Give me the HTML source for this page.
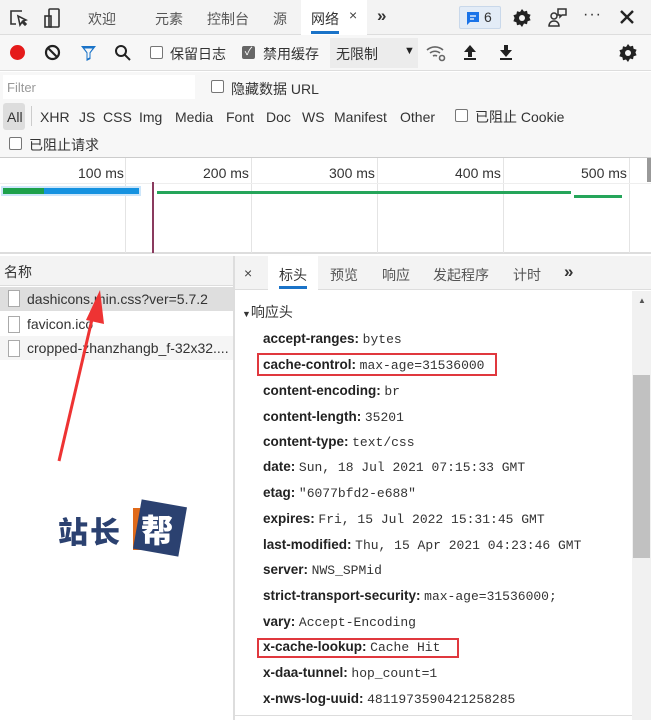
<!DOCTYPE html>
<html><head><meta charset="utf-8"><style>
*{margin:0;padding:0;box-sizing:border-box}
body{width:651px;height:720px;overflow:hidden;background:#fff;font-family:"Liberation Sans","Noto Sans CJK SC",sans-serif;font-size:13px;color:#333;position:relative}
.a{position:absolute;white-space:nowrap}
.cb{position:absolute;width:13px;height:13px;border:1px solid #767676;border-radius:2px;background:#fff}
.k{font-weight:bold;color:#222;font-size:13.5px}
.v{font-family:"Liberation Mono",monospace;font-size:13px;color:#333}
</style></head><body>
<!-- top tabs -->
<div class="a" style="left:0;top:0;width:651px;height:35px;background:#f3f3f3;border-bottom:1px solid #ddd"></div>
<svg class="a" style="left:8px;top:8px" width="20" height="20" viewBox="0 0 20 20" fill="none" stroke="#333" stroke-width="1.6"><path d="M14 3H3v13h5"/><path d="M10 8l2 9 2-3 3 3 1-1-3-3 3-1z" fill="#fff"/></svg>
<svg class="a" style="left:43px;top:7px" width="18" height="22" viewBox="0 0 18 22" fill="none" stroke="#333" stroke-width="1.6"><rect x="6" y="2" width="10" height="18" rx="1"/><rect x="2" y="9" width="6" height="11"/></svg>
<div class="a" style="left:88px;top:9px;color:#555;font-size:14px">欢迎</div>
<div class="a" style="left:155px;top:9px;color:#555;font-size:14px">元素</div>
<div class="a" style="left:207px;top:9px;color:#555;font-size:14px">控制台</div>
<div class="a" style="left:273px;top:9px;color:#555;font-size:14px">源</div>
<div class="a" style="left:301px;top:0;width:66px;height:35px;background:#fff"></div>
<div class="a" style="left:311px;top:9px;color:#333;font-size:14px">网络</div>
<div class="a" style="left:349px;top:7px;color:#444;font-size:14px">×</div>
<div class="a" style="left:311px;top:31px;width:28px;height:3px;background:#1a73c8"></div>
<div class="a" style="left:377px;top:6px;color:#333;font-size:17px;font-weight:bold">»</div>
<div class="a" style="left:459px;top:6px;width:42px;height:23px;background:#e3ecf7;border:1px solid #c9d8ea;border-radius:2px"></div>
<svg class="a" style="left:466px;top:11px" width="14" height="14" viewBox="0 0 14 14"><path d="M1 1h12v10H4l-3 3z" fill="#1a73e8"/><path d="M4 5h6M4 8h4" stroke="#fff" stroke-width="1.3"/></svg>
<div class="a" style="left:484px;top:9px;color:#333;font-size:14px">6</div>
<svg class="a" style="left:512px;top:8px" width="20" height="20" viewBox="0 0 20 20"><path d="M10 1l2 2.5 3-.8.6 3 3 1-1.2 2.8 1.2 2.8-3 1-.6 3-3-.8L10 19l-2-2.5-3 .8-.6-3-3-1L2.6 10 1.4 7.2l3-1 .6-3 3 .8z" fill="#222"/><circle cx="10" cy="10" r="3" fill="#f3f3f3"/></svg>
<svg class="a" style="left:546px;top:6px" width="24" height="24" viewBox="0 0 24 24" fill="none" stroke="#333" stroke-width="1.5"><circle cx="8" cy="10" r="3"/><path d="M3 20c0-3 2-5 5-5s5 2 5 5z"/><path d="M12 3h8v6h-4l-2 2V9h-2z"/></svg>
<div class="a" style="left:583px;top:6px;color:#333;font-size:16px;letter-spacing:1px">···</div>
<svg class="a" style="left:620px;top:10px" width="14" height="14" viewBox="0 0 14 14" stroke="#222" stroke-width="2.4"><path d="M1 1l12 12M13 1L1 13"/></svg>
<!-- toolbar -->
<div class="a" style="left:0;top:35px;width:651px;height:36px;background:#f7f7f7;border-bottom:1px solid #ddd"></div>
<div class="a" style="left:10px;top:45px;width:15px;height:15px;border-radius:50%;background:#e51b1b"></div>
<svg class="a" style="left:44px;top:44px" width="17" height="17" viewBox="0 0 17 17" fill="none" stroke="#222" stroke-width="2.2"><circle cx="8.5" cy="8.5" r="6.5"/><path d="M4 4l9 9"/></svg>
<svg class="a" style="left:80px;top:45px" width="17" height="16" viewBox="0 0 17 16"><path d="M1 1h15l-5.5 7v6l-4 2V8z" fill="#1a73c8"/><path d="M4.5 3.5h8l-3 4v5l-2 1V7.5z" fill="#f7f7f7"/></svg>
<svg class="a" style="left:114px;top:44px" width="18" height="18" viewBox="0 0 18 18" fill="none" stroke="#222" stroke-width="2"><circle cx="7" cy="7" r="5"/><path d="M11 11l5 5"/></svg>
<div class="cb" style="left:150px;top:46px"></div>
<div class="a" style="left:170px;top:44px;font-size:14px;color:#333">保留日志</div>
<div class="a" style="left:242px;top:46px;width:13px;height:13px;background:#666;border-radius:2px;color:#fff;font-size:11px;line-height:13px;text-align:center">✓</div>
<div class="a" style="left:263px;top:44px;font-size:14px;color:#333">禁用缓存</div>
<div class="a" style="left:330px;top:38px;width:88px;height:30px;background:#ececec"></div>
<div class="a" style="left:336px;top:44px;font-size:14px;color:#333">无限制</div>
<div class="a" style="left:404px;top:45px;font-size:11px;color:#222">▼</div>
<svg class="a" style="left:426px;top:44px" width="22" height="18" viewBox="0 0 22 18" fill="none" stroke="#666" stroke-width="1.6"><path d="M1 6a12 12 0 0 1 16 0M4 9a8 8 0 0 1 10 0M7 12a4 4 0 0 1 4 0"/><circle cx="16" cy="14" r="2.5"/></svg>
<svg class="a" style="left:463px;top:44px" width="14" height="17" viewBox="0 0 14 17"><path d="M7 1l6 7H9v5H5V8H1z" fill="#222"/><rect x="1" y="14" width="12" height="2" fill="#222"/></svg>
<svg class="a" style="left:499px;top:44px" width="14" height="17" viewBox="0 0 14 17"><path d="M7 13l6-7H9V1H5v5H1z" fill="#222"/><rect x="1" y="14" width="12" height="2" fill="#222"/></svg>
<svg class="a" style="left:618px;top:43px" width="20" height="20" viewBox="0 0 20 20"><path d="M10 1l2 2.5 3-.8.6 3 3 1-1.2 2.8 1.2 2.8-3 1-.6 3-3-.8L10 19l-2-2.5-3 .8-.6-3-3-1L2.6 10 1.4 7.2l3-1 .6-3 3 .8z" fill="#222"/><circle cx="10" cy="10" r="3" fill="#f7f7f7"/></svg>
<!-- filter rows -->
<div class="a" style="left:0;top:72px;width:651px;height:86px;background:#f7f7f7;border-bottom:1px solid #ccc"></div>
<div class="a" style="left:3px;top:75px;width:192px;height:24px;background:#fff"></div>
<div class="a" style="left:7px;top:80px;color:#999;font-size:13px">Filter</div>
<div class="cb" style="left:211px;top:80px"></div>
<div class="a" style="left:231px;top:79px;font-size:14px">隐藏数据 URL</div>
<div class="a" style="left:3px;top:103px;width:22px;height:27px;background:#ddd;border-radius:3px"></div>
<div class="a" style="left:31px;top:106px;width:1px;height:20px;background:#ccc"></div>
<div class="a" style="left:7px;top:109px;font-size:14px;color:#333">All</div>
<div class="a" style="left:40px;top:109px;font-size:14px;color:#333">XHR</div>
<div class="a" style="left:79px;top:109px;font-size:14px;color:#333">JS</div>
<div class="a" style="left:103px;top:109px;font-size:14px;color:#333">CSS</div>
<div class="a" style="left:139px;top:109px;font-size:14px;color:#333">Img</div>
<div class="a" style="left:175px;top:109px;font-size:14px;color:#333">Media</div>
<div class="a" style="left:226px;top:109px;font-size:14px;color:#333">Font</div>
<div class="a" style="left:266px;top:109px;font-size:14px;color:#333">Doc</div>
<div class="a" style="left:302px;top:109px;font-size:14px;color:#333">WS</div>
<div class="a" style="left:334px;top:109px;font-size:14px;color:#333">Manifest</div>
<div class="a" style="left:400px;top:109px;font-size:14px;color:#333">Other</div>
<div class="cb" style="left:455px;top:109px"></div>
<div class="a" style="left:475px;top:107px;font-size:14px;color:#333">已阻止 Cookie</div>
<div class="cb" style="left:9px;top:137px"></div>
<div class="a" style="left:29px;top:135px;font-size:14px;color:#333">已阻止请求</div>
<!-- timeline -->
<div class="a" style="left:0;top:158px;width:651px;height:96px;background:#fff;border-bottom:2px solid #ddd"></div>
<div class="a" style="left:125px;top:158px;width:1px;height:95px;background:#e4e4e4"></div>
<div class="a" style="left:251px;top:158px;width:1px;height:95px;background:#e4e4e4"></div>
<div class="a" style="left:377px;top:158px;width:1px;height:95px;background:#e4e4e4"></div>
<div class="a" style="left:503px;top:158px;width:1px;height:95px;background:#e4e4e4"></div>
<div class="a" style="left:629px;top:158px;width:1px;height:95px;background:#e4e4e4"></div>
<div class="a" style="left:0;top:183px;width:651px;height:1px;background:#eee"></div>
<div class="a" style="left:78px;top:165px;font-size:14px;color:#333">100 ms</div>
<div class="a" style="left:203px;top:165px;font-size:14px;color:#333">200 ms</div>
<div class="a" style="left:329px;top:165px;font-size:14px;color:#333">300 ms</div>
<div class="a" style="left:455px;top:165px;font-size:14px;color:#333">400 ms</div>
<div class="a" style="left:581px;top:165px;font-size:14px;color:#333">500 ms</div>
<div class="a" style="left:647px;top:158px;width:4px;height:24px;background:#999"></div>
<div class="a" style="left:1px;top:186px;width:140px;height:10px;background:#cde6fa"></div>
<div class="a" style="left:3px;top:188px;width:41px;height:6px;background:#1da14b"></div>
<div class="a" style="left:44px;top:188px;width:95px;height:6px;background:#1592e0"></div>
<div class="a" style="left:152px;top:182px;width:2px;height:71px;background:#8a3a5e"></div>
<div class="a" style="left:157px;top:191px;width:414px;height:3px;background:#25a55a"></div>
<div class="a" style="left:574px;top:195px;width:48px;height:3px;background:#25a55a"></div>
<!-- left panel -->
<div class="a" style="left:0;top:256px;width:233px;height:30px;background:#f3f3f3;border-bottom:1px solid #ddd"></div>
<div class="a" style="left:4px;top:262px;font-size:14px;color:#333">名称</div>
<div class="a" style="left:233px;top:256px;width:2px;height:464px;background:#ddd"></div>
<div class="a" style="left:0;top:287px;width:233px;height:24px;background:#dedede"></div>
<div class="a" style="left:0;top:336px;width:233px;height:24px;background:#f5f5f5"></div>
<div class="a" style="left:8px;top:290px;width:12px;height:17px;border:1px solid #aaa;background:#fff"></div>
<div class="a" style="left:8px;top:316px;width:12px;height:17px;border:1px solid #aaa;background:#fff"></div>
<div class="a" style="left:8px;top:340px;width:12px;height:17px;border:1px solid #aaa;background:#fff"></div>
<div class="a" style="left:27px;top:291px;font-size:14px;color:#333">dashicons.min.css?ver=5.7.2</div>
<div class="a" style="left:27px;top:316px;font-size:14px;color:#333">favicon.ico</div>
<div class="a" style="left:27px;top:340px;font-size:14px;color:#333">cropped-zhanzhangb_f-32x32....</div>
<!-- arrow -->
<svg class="a" style="left:0;top:280px" width="120" height="200" viewBox="0 0 120 200"><path d="M59 181L93 35" stroke="#ee3333" stroke-width="3"/><path d="M86 40L100 10L104 44z" fill="#ee3333"/></svg>
<!-- logo -->
<div class="a" style="left:58px;top:508px;font-size:30px;font-weight:900;color:#2b4170;letter-spacing:2px;font-family:'Noto Sans CJK SC',sans-serif">站长</div>
<div class="a" style="left:133px;top:508px;width:44px;height:42px;background:#e06a1a"></div>
<div class="a" style="left:137px;top:503px;width:46px;height:50px;background:#2b4170;transform:rotate(10deg)"></div>
<div class="a" style="left:141px;top:506px;font-size:32px;font-weight:900;color:#fff;font-family:'Noto Sans CJK SC',sans-serif">帮</div>
<!-- right panel -->
<div class="a" style="left:235px;top:256px;width:416px;height:34px;background:#f3f3f3;border-bottom:1px solid #ddd"></div>
<div class="a" style="left:244px;top:265px;font-size:14px;color:#444">×</div>
<div class="a" style="left:268px;top:256px;width:50px;height:34px;background:#fff"></div>
<div class="a" style="left:279px;top:265px;font-size:14px;color:#333">标头</div>
<div class="a" style="left:279px;top:286px;width:28px;height:3px;background:#1a73c8"></div>
<div class="a" style="left:330px;top:265px;font-size:14px;color:#555">预览</div>
<div class="a" style="left:382px;top:265px;font-size:14px;color:#555">响应</div>
<div class="a" style="left:433px;top:265px;font-size:14px;color:#555">发起程序</div>
<div class="a" style="left:513px;top:265px;font-size:14px;color:#555">计时</div>
<div class="a" style="left:564px;top:262px;font-size:17px;font-weight:bold;color:#333">»</div>
<div class="a" style="left:632px;top:291px;width:19px;height:429px;background:#f1f1f1"></div>
<div class="a" style="left:638px;top:296px;font-size:8px;color:#555">▲</div>
<div class="a" style="left:633px;top:375px;width:17px;height:183px;background:#c1c1c1"></div>
<div class="a" style="left:242px;top:302px;font-size:14px;color:#333"><span style="font-size:9px">▼</span>响应头</div>
<div class="a" style="left:263px;top:331px"><span class="k">accept-ranges:</span> <span class="v">bytes</span></div>
<div class="a" style="left:263px;top:357px"><span class="k">cache-control:</span> <span class="v">max-age=31536000</span></div>
<div class="a" style="left:263px;top:383px"><span class="k">content-encoding:</span> <span class="v">br</span></div>
<div class="a" style="left:263px;top:409px"><span class="k">content-length:</span> <span class="v">35201</span></div>
<div class="a" style="left:263px;top:434px"><span class="k">content-type:</span> <span class="v">text/css</span></div>
<div class="a" style="left:263px;top:459px"><span class="k">date:</span> <span class="v">Sun, 18 Jul 2021 07:15:33 GMT</span></div>
<div class="a" style="left:263px;top:485px"><span class="k">etag:</span> <span class="v">"6077bfd2-e688"</span></div>
<div class="a" style="left:263px;top:511px"><span class="k">expires:</span> <span class="v">Fri, 15 Jul 2022 15:31:45 GMT</span></div>
<div class="a" style="left:263px;top:537px"><span class="k">last-modified:</span> <span class="v">Thu, 15 Apr 2021 04:23:46 GMT</span></div>
<div class="a" style="left:263px;top:562px"><span class="k">server:</span> <span class="v">NWS_SPMid</span></div>
<div class="a" style="left:263px;top:588px"><span class="k">strict-transport-security:</span> <span class="v">max-age=31536000;</span></div>
<div class="a" style="left:263px;top:614px"><span class="k">vary:</span> <span class="v">Accept-Encoding</span></div>
<div class="a" style="left:263px;top:639px"><span class="k">x-cache-lookup:</span> <span class="v">Cache Hit</span></div>
<div class="a" style="left:263px;top:665px"><span class="k">x-daa-tunnel:</span> <span class="v">hop_count=1</span></div>
<div class="a" style="left:263px;top:691px"><span class="k">x-nws-log-uuid:</span> <span class="v">4811973590421258285</span></div>
<div class="a" style="left:257px;top:353px;width:240px;height:23px;border:2px solid #e0383e"></div>
<div class="a" style="left:257px;top:638px;width:202px;height:20px;border:2px solid #e0383e"></div>
<div class="a" style="left:235px;top:715px;width:397px;height:1px;background:#ddd"></div>
</body></html>
